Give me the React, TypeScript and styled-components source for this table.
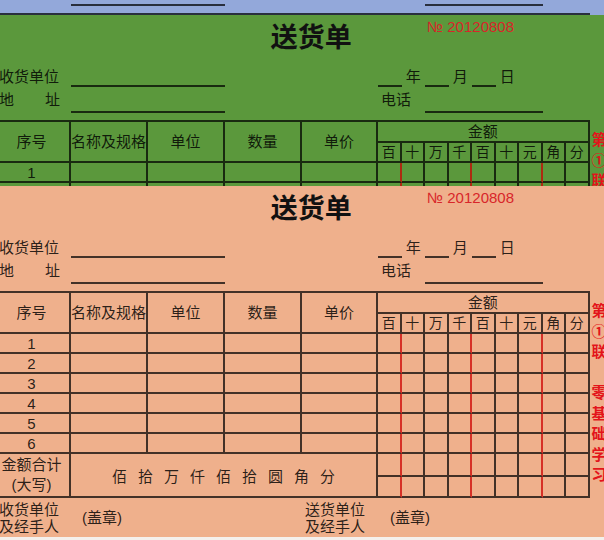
import React from "react";
import styled, { createGlobalStyle } from "styled-components";

const GlobalStyle = createGlobalStyle`
  *, *::before, *::after { box-sizing: border-box; }
  html, body {
    margin: 0;
    padding: 0;
    width: 604px;
    height: 540px;
    overflow: hidden;
    background: #f4f0ec;
  }
  body {
    font-family: "Liberation Sans", "Noto Sans CJK SC", sans-serif;
  }
`;

const COLS = "77px 77px 77px 77px 76px repeat(9, 23.5px)";
const LINE = "rgba(0, 0, 0, 0.72)";
const RED_LINE = "rgba(205, 0, 0, 0.72)";
const INK = "rgba(0, 0, 0, 0.84)";

const Stack = styled.main`
  display: flex;
  flex-direction: column;
`;

const Sheet = styled.section<{ $bg: string; $height: number }>`
  flex: none;
  height: ${(p) => p.$height}px;
  overflow: hidden;
  background: ${(p) => p.$bg};
  color: ${INK};
`;

const SheetBody = styled.div<{ $shift: number }>`
  width: 640px;
  margin-left: -8px;
  margin-top: ${(p) => p.$shift}px;
  display: flex;
  flex-direction: column;
`;

/* ---------- header ---------- */

const Header = styled.header`
  display: grid;
  grid-template-columns: ${COLS};
  grid-template-rows: 50px 22px 26px 7px;
  padding-left: 2px;
  font-size: 15px;
`;

const Title = styled.h1`
  grid-column: 4 / 7;
  grid-row: 1;
  align-self: start;
  margin: 8px 4px 0 0;
  font-size: 27px;
  line-height: 30px;
  font-weight: 700;
  text-align: center;
  color: #111;
  white-space: nowrap;
`;

const Serial = styled.div`
  grid-column: 8 / -1;
  grid-row: 1;
  align-self: start;
  margin-top: 3px;
  padding-left: 2px;
  color: #d8262a;
  font-size: 15px;
  line-height: 18px;
  white-space: nowrap;
`;

const FieldLabel = styled.div<{ $row: number }>`
  grid-column: 1;
  grid-row: ${(p) => p.$row};
  align-self: ${(p) => (p.$row === 2 ? "end" : "center")};
  display: flex;
  justify-content: space-between;
  width: 66px;
  padding-left: 5px;
  line-height: 20px;
  white-space: nowrap;
`;

const Blank = styled.div<{ $col: string; $row: number }>`
  grid-column: ${(p) => p.$col};
  grid-row: ${(p) => p.$row};
  border-bottom: 2px solid ${LINE};
`;

const DateChar = styled.div<{ $col: number }>`
  grid-column: ${(p) => p.$col};
  grid-row: 2;
  align-self: end;
  text-align: center;
  line-height: 20px;
`;

const PhoneLabel = styled.div`
  grid-column: 6 / 8;
  grid-row: 3;
  align-self: center;
  padding-left: 3px;
  line-height: 20px;
  white-space: nowrap;
`;

/* ---------- ledger table ---------- */

const TableRow = styled.div`
  display: flex;
  align-items: flex-start;
`;

const Ledger = styled.div`
  flex: none;
  display: grid;
  grid-template-columns: ${COLS};
  grid-template-rows: 21px 20px repeat(6, 20px) 23px 21px;
  border-top: 2px solid ${LINE};
  border-left: 2px solid ${LINE};
`;

const Cell = styled.div<{ $red?: boolean; $cols?: number; $rows?: number; $small?: boolean }>`
  grid-column: span ${(p) => p.$cols ?? 1};
  grid-row: span ${(p) => p.$rows ?? 1};
  border-right: 2px solid ${(p) => (p.$red ? RED_LINE : LINE)};
  border-bottom: 2px solid ${LINE};
  display: flex;
  align-items: center;
  justify-content: center;
  font-size: ${(p) => (p.$small ? 14 : 15)}px;
  line-height: 1;
  white-space: nowrap;
  min-width: 0;
`;

const TotalLabel = styled(Cell)`
  flex-direction: column;
  line-height: 20px;
`;

const Words = styled(Cell)`
  gap: 11px;
  padding-top: 2px;
`;

const SideNote = styled.div`
  display: flex;
  flex-direction: column;
  padding: 10px 0 0 2px;
  color: #e3141b;
  font-weight: 700;
  font-size: 15px;
  line-height: 20.5px;
  white-space: nowrap;
`;

/* ---------- signature row ---------- */

const SignRow = styled.footer`
  display: grid;
  grid-template-columns: ${COLS};
  height: 39px;
  padding-left: 2px;
  align-items: center;
  font-size: 15px;
`;

const SignLabel = styled.div<{ $col: string; $pad: number }>`
  grid-column: ${(p) => p.$col};
  padding-left: ${(p) => p.$pad}px;
  line-height: 17px;
  white-space: nowrap;
`;

const AMOUNT_HEAD = ["百", "十", "万", "千", "百", "十", "元", "角", "分"];
const RED_AFTER = new Set([0, 3, 6]);
const WORDS = ["佰", "拾", "万", "仟", "佰", "拾", "圆", "角", "分"];
const NOTE = ["第", "①", "联", "　", "零", "基", "础", "学", "习"];

function AmountCells() {
  return (
    <>
      {AMOUNT_HEAD.map((_, i) => (
        <Cell key={i} $red={RED_AFTER.has(i)} />
      ))}
    </>
  );
}

function FormSheet({ bg, height, shift = 0 }: { bg: string; height: number; shift?: number }) {
  return (
    <Sheet $bg={bg} $height={height}>
      <SheetBody $shift={shift}>
        <Header>
          <Title>送货单</Title>
          <Serial>№ 20120808</Serial>

          <FieldLabel $row={2}>
            <span>收货单位</span>
          </FieldLabel>
          <Blank $col="2 / 4" $row={2} />
          <Blank $col="6" $row={2} />
          <DateChar $col={7}>年</DateChar>
          <Blank $col="8" $row={2} />
          <DateChar $col={9}>月</DateChar>
          <Blank $col="10" $row={2} />
          <DateChar $col={11}>日</DateChar>

          <FieldLabel $row={3}>
            <span>地</span>
            <span>址</span>
          </FieldLabel>
          <Blank $col="2 / 4" $row={3} />
          <PhoneLabel>电话</PhoneLabel>
          <Blank $col="8 / 13" $row={3} />
        </Header>

        <TableRow>
          <Ledger>
            <Cell $rows={2}>序号</Cell>
            <Cell $rows={2}>名称及规格</Cell>
            <Cell $rows={2}>单位</Cell>
            <Cell $rows={2}>数量</Cell>
            <Cell $rows={2}>单价</Cell>
            <Cell $cols={9}>金额</Cell>
            {AMOUNT_HEAD.map((c, i) => (
              <Cell key={i} $small>
                {c}
              </Cell>
            ))}

            {[1, 2, 3, 4, 5, 6].map((n) => (
              <React.Fragment key={n}>
                <Cell>{n}</Cell>
                <Cell />
                <Cell />
                <Cell />
                <Cell />
                <AmountCells />
              </React.Fragment>
            ))}

            <TotalLabel $rows={2}>
              <span>金额合计</span>
              <span>(大写)</span>
            </TotalLabel>
            <Words $cols={4} $rows={2}>
              {WORDS.map((w, i) => (
                <span key={i}>{w}</span>
              ))}
            </Words>
            <AmountCells />
            <AmountCells />
          </Ledger>
          <SideNote>
            {NOTE.map((c, i) => (
              <span key={i}>{c}</span>
            ))}
          </SideNote>
        </TableRow>

        <SignRow>
          <SignLabel $col="1" $pad={5}>
            收货单位
            <br />
            及经手人
          </SignLabel>
          <SignLabel $col="2 / 4" $pad={11}>
            (盖章)
          </SignLabel>
          <SignLabel $col="5" $pad={3}>
            送货单位
            <br />
            及经手人
          </SignLabel>
          <SignLabel $col="6 / -1" $pad={12}>
            (盖章)
          </SignLabel>
        </SignRow>
      </SheetBody>
    </Sheet>
  );
}

export default function App() {
  return (
    <>
      <GlobalStyle />
      <Stack>
        <FormSheet bg="#93a8da" height={15} shift={-92} />
        <FormSheet bg="#5b983c" height={171} />
        <FormSheet bg="#efb08c" height={351} />
      </Stack>
    </>
  );
}
